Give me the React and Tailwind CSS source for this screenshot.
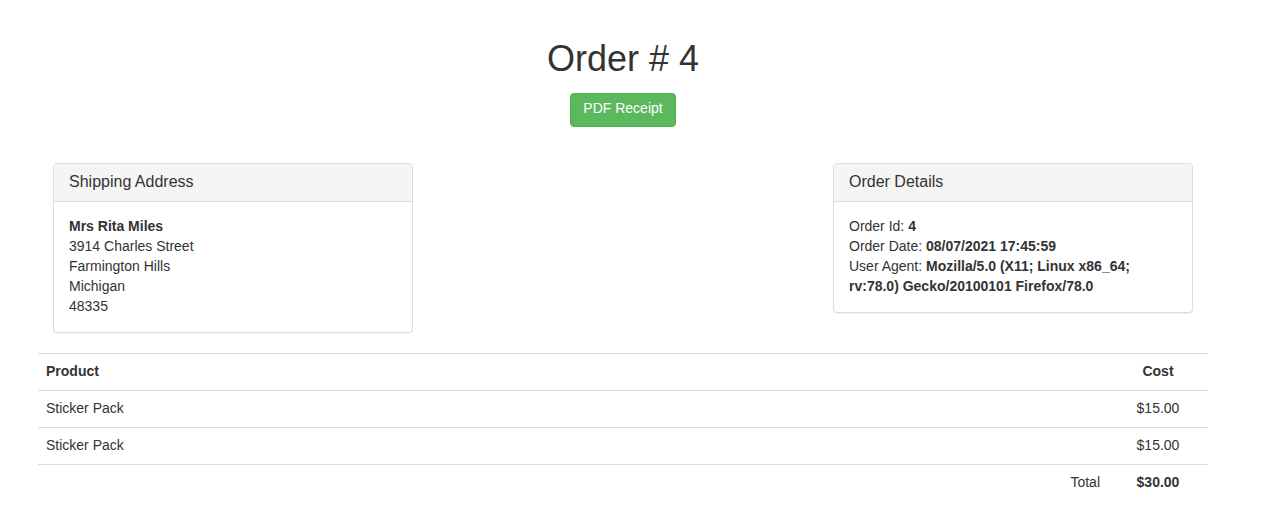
export default function App() {
  const font = { fontFamily: '"Liberation Sans", Arial, Helvetica, sans-serif' };
  return (
    <div className="w-[1246px] bg-white text-[#333] text-[14px] leading-[20px]" style={font}>
      <div className="mx-auto w-[1170px] pt-[39px] pb-[16px]">
        <h1 className="text-center text-[36px] leading-[40px] font-normal text-[#333]">Order # 4</h1>
        <div className="mt-[14px] flex justify-center">
          <button className="h-[34px] px-[12px] pt-[4px] pb-[8px] rounded-[4px] border border-[#4cae4c] bg-[#5cb85c] text-white text-[14px] leading-[20px]">
            PDF Receipt
          </button>
        </div>

        <div className="mt-[36px] flex justify-between">
          <div className="w-[390px] px-[15px]">
            <div className="mb-[20px] rounded-[4px] border border-[#ddd] bg-white shadow-[0_1px_1px_rgba(0,0,0,0.05)]">
              <div className="rounded-t-[3px] border-b border-[#ddd] bg-[#f5f5f5] px-[15px] pt-[9px] pb-[11px] text-[16px] leading-[17px]">
                Shipping Address
              </div>
              <div className="px-[15px] pt-[14px] pb-[16px]">
                <div className="font-bold">Mrs Rita Miles</div>
                <div>3914 Charles Street</div>
                <div>Farmington Hills</div>
                <div>Michigan</div>
                <div>48335</div>
              </div>
            </div>
          </div>
          <div className="w-[390px] px-[15px]">
            <div className="mb-[20px] rounded-[4px] border border-[#ddd] bg-white shadow-[0_1px_1px_rgba(0,0,0,0.05)]">
              <div className="rounded-t-[3px] border-b border-[#ddd] bg-[#f5f5f5] px-[15px] pt-[9px] pb-[11px] text-[16px] leading-[17px]">
                Order Details
              </div>
              <div className="px-[15px] pt-[14px] pb-[16px]">
                <div>Order Id: <b>4</b></div>
                <div>Order Date: <b>08/07/2021 17:45:59</b></div>
                <div>
                  User Agent: <b>Mozilla/5.0 (X11; Linux x86_64; rv:78.0) Gecko/20100101 Firefox/78.0</b>
                </div>
              </div>
            </div>
          </div>
        </div>

        <table className="w-full border-collapse">
          <thead>
            <tr>
              <th className="border-t border-[#ddd] px-[8px] pt-[7px] pb-[9px] text-left font-bold">Product</th>
              <th className="border-t border-[#ddd] px-[8px] pt-[7px] pb-[9px]"></th>
              <th className="w-[100px] border-t border-[#ddd] px-[8px] pt-[7px] pb-[9px] text-center font-bold">Cost</th>
            </tr>
          </thead>
          <tbody>
            <tr>
              <td className="border-t border-[#ddd] px-[8px] pt-[7px] pb-[9px]">Sticker Pack</td>
              <td className="border-t border-[#ddd] px-[8px] pt-[7px] pb-[9px]"></td>
              <td className="border-t border-[#ddd] px-[8px] pt-[7px] pb-[9px] text-center">$15.00</td>
            </tr>
            <tr>
              <td className="border-t border-[#ddd] px-[8px] pt-[7px] pb-[9px]">Sticker Pack</td>
              <td className="border-t border-[#ddd] px-[8px] pt-[7px] pb-[9px]"></td>
              <td className="border-t border-[#ddd] px-[8px] pt-[7px] pb-[9px] text-center">$15.00</td>
            </tr>
            <tr>
              <td className="border-t border-[#ddd] px-[8px] pt-[7px] pb-[9px]"></td>
              <td className="border-t border-[#ddd] px-[8px] pt-[7px] pb-[9px] text-right">Total</td>
              <td className="border-t border-[#ddd] px-[8px] pt-[7px] pb-[9px] text-center font-bold">$30.00</td>
            </tr>
          </tbody>
        </table>
      </div>
    </div>
  );
}
